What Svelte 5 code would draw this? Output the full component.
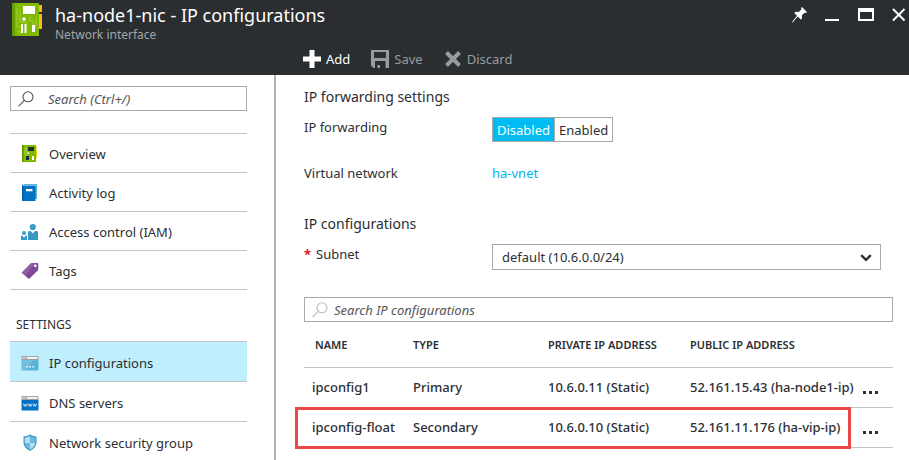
<script>
  let forwarding = $state('Disabled');
  let subnet = $state('default (10.6.0.0/24)');

  const general = [
    { label: 'Overview', icon: 'nic' },
    { label: 'Activity log', icon: 'log' },
    { label: 'Access control (IAM)', icon: 'people' },
    { label: 'Tags', icon: 'tag' },
  ];
  const settings = [
    { label: 'IP configurations', icon: 'ip', selected: true },
    { label: 'DNS servers', icon: 'dns' },
    { label: 'Network security group', icon: 'shield' },
  ];
  const rows = [
    { name: 'ipconfig1', type: 'Primary', priv: '10.6.0.11 (Static)', pub: '52.161.15.43 (ha-node1-ip)' },
    { name: 'ipconfig-float', type: 'Secondary', priv: '10.6.0.10 (Static)', pub: '52.161.11.176 (ha-vip-ip)', marked: true },
  ];
</script>

{#snippet magnifier()}
  <svg class="magnifier" width="16" height="16" viewBox="0 0 16 16" fill="none" stroke="currentColor" stroke-width="1.1" aria-hidden="true">
    <circle cx="10" cy="5.8" r="5" /><path d="M6.4 9.4 .6 15.2" />
  </svg>
{/snippet}

{#snippet icon(name)}
  <svg class="icon" width="18" height="18" viewBox="0 0 18 18" aria-hidden="true">
    {#if name === 'nic'}
      <path fill="#fcd116" d="M14 1.5h2V4h-2zM14 5h2v8h-2z" />
      <path fill="#7fba00" d="M1 0h14v17H1z" />
      <path fill="#5f9300" d="M1 0h1.5v17H1z" />
      <path fill="none" stroke="#b0d65a" stroke-width=".7" d="M4 2v8h2v3M5.5 3v5" />
      <path fill="#1e2b33" d="M7 2h6v4H7zM5 11h3v4H5z" />
      <path fill="#fff" d="M6.5 7.5h1.6v1.6H6.5zM11 11h2v4h-2z" />
    {:else if name === 'log'}
      <path fill="#59b4d9" d="M3 0h13v15H3z" />
      <path fill="#fff" d="M2.5 1h12.2v1H2.5z" />
      <path fill="#0072c6" d="M1.8 1.6H14.5V17H2Q1 17 1 16V1.2Q1 .5 2.5.3Z" />
      <path fill="#005ba1" d="M1 2h1.3v15Q1 17 1 16z" />
      <path fill="#fff" d="M5 5h6.5v2.3H5z" />
    {:else if name === 'people'}
      <g fill="#3999c6">
        <circle cx="11.8" cy="4" r="3.1" />
        <path d="M7 9.2Q7 8 8.4 8h1.2l2.2 2.6L14 8h1.2Q17 8 17 9.2V17H7z" />
        <circle cx="3" cy="10" r="1.9" />
        <path d="M0 13.4Q0 12.6 1 12.6l2 1.8 2-1.8h1V17H0z" />
      </g>
    {:else if name === 'tag'}
      <path fill="#804998" d="M.6 10.8 9.6 1.5Q10 1 11 1h5Q17.3 1 17.3 2.2V7q0 .8-.5 1.4L8 17Z" />
      <path fill="#9a6bae" d="M.6 10.8 9.6 1.5Q10 1 11 1h3L4.5 14Z" opacity=".6" />
      <circle cx="14.3" cy="3.8" r="1.4" fill="#fff" />
    {:else if name === 'ip' || name === 'dns'}
      <path fill="#a0a1a2" d="M.5 2h17v4H.5z" />
      <path fill={name === 'ip' ? '#59b4d9' : '#0072c6'} d="M.5 6h17v10.5H.5z" />
      <path fill="#fff" d="M6 3h10.5v1.8H6zM1.5 3.2h1.3v1.3H1.5zM3.6 3.2h1.3v1.3H3.6z" />
      {#if name === 'ip'}
        <path fill="#fff" d="M5 12h1.5v1.5H5zM8.2 12h1.5v1.5H8.2zM11.4 12h1.5v1.5h-1.5z" />
        <path fill="#fff" opacity=".15" d="M.5 6h12L5 16.5H.5z" />
      {:else}
        <path fill="none" stroke="#fff" stroke-width=".8" opacity=".85" d="m2.4 9.6 1 2.8.9-2.4.9 2.4 1-2.8M7.1 9.6l1 2.8.9-2.4.9 2.4 1-2.8M11.8 9.6l1 2.8.9-2.4.9 2.4 1-2.8" />
      {/if}
    {:else}
      <path fill="#3999c6" d="M9 .5Q6 2.6 2.500 2.6V8.5C2.5 12.5 6 15.5 9 17c3-1.5 6.5-4.5 6.5-8.5V2.6Q12 2.600 9 .5Z" />
      <path fill="#b8dff0" d="M9 2Q6.800 3.500 3.700 3.700V9H9zM9 9h5.300C14 12.300 11.500 14.300 9 15.700z" />
      <path fill="#6bbbe0" d="M9 2q2.200 1.500 5.300 1.700V9H9zM9 9H3.700C4 12.300 6.500 14.300 9 15.700z" />
    {/if}
  </svg>
{/snippet}

{#snippet menu(items)}
  <ul>
    {#each items as item}
      <li class:selected={item.selected}>
        <a href="#blade" aria-current={item.selected ? 'page' : undefined}>{@render icon(item.icon)}{item.label}</a>
      </li>
    {/each}
  </ul>
{/snippet}

<div class="blade">
  <header>
    <div class="heading">
      <svg class="logo" width="32" height="34" viewBox="0 0 32 34" aria-hidden="true">
        <path fill="#fcb813" d="M27 2h3v7h-3zM27 11h3v15h-3z" />
        <path fill="#7fba00" d="M0 0h27v33H0z" />
        <path fill="#69a000" d="M0 0h3v33H0z" />
        <path fill="none" stroke="#a5d03e" stroke-width="1" d="M5 5v19h4M8 8v11h6v5M12 18v-2M18 12v6h3v4M5 28h3v3M24 14v10" />
        <path fill="#fff" d="M11 3h12v8H11zM9 21h2v9H9zM12.5 21h2v9h-2zM20 22h3v7h-3z" />
        <circle cx="12" cy="16" r="1.8" fill="#fff" />
      </svg>
      <div class="titles">
        <h1>ha-node1-nic - IP configurations</h1>
        <p>Network interface</p>
      </div>
      <div class="window">
        <button aria-label="Pin">
          <svg width="16" height="16" viewBox="0 0 16 16"><path fill="#fff" d="M10 0l5 5-1 1-1.500-.3-2.700 2.700.2 3-1.200 1.200L5.700 9.500 .6 15.500 0 15 5 8.700 2.300 6 3.500 4.800l3.200.2 2.800-2.700L9 1z" /></svg>
        </button>
        <button aria-label="Minimize">
          <svg width="16" height="16" viewBox="0 0 16 16"><path fill="#fff" d="M0 12h14v2H0z" /></svg>
        </button>
        <button aria-label="Maximize">
          <svg width="16" height="16" viewBox="0 0 16 16"><path fill="#fff" fill-rule="evenodd" d="M0 1h16v13H0zM2 5v7h12V5z" /></svg>
        </button>
        <button aria-label="Close">
          <svg width="16" height="16" viewBox="0 0 16 16"><path stroke="#fff" stroke-width="2" d="m2 2 11.500 11.500M13.500 2 2 13.500" /></svg>
        </button>
      </div>
    </div>
    <div class="toolbar">
      <button>
        <svg width="18" height="18" viewBox="0 0 18 18" aria-hidden="true"><path fill="#fff" d="M6.5 0h5v6.5H18v5h-6.500V18h-5v-6.500H0v-5h6.500z" /></svg>
        Add
      </button>
      <button disabled>
        <svg width="18" height="18" viewBox="0 0 18 18" aria-hidden="true"><path fill="#999c9e" fill-rule="evenodd" d="M0 1Q0 0 1 0h16q1 0 1 1v17H2.500L0 15.500zM3 2v6h12V2zM4 11v7h2.500v-3H9v3h5.500v-7z" /></svg>
        Save
      </button>
      <button disabled>
        <svg width="18" height="18" viewBox="0 0 18 18" aria-hidden="true"><path stroke="#999c9e" stroke-width="4" d="m2.500 2.500 13 13M15.500 2.500l-13 13" /></svg>
        Discard
      </button>
    </div>
  </header>

  <div class="body">
    <nav>
      <label class="search">
        {@render magnifier()}
        <input type="text" placeholder="Search (Ctrl+/)" aria-label="Search menu" />
      </label>
      {@render menu(general)}
      <h2>SETTINGS</h2>
      {@render menu(settings)}
    </nav>

    <main>
      <h3>IP forwarding settings</h3>
      <div class="field">
        <span class="name" id="fwd">IP forwarding</span>
        <div class="toggle" role="group" aria-labelledby="fwd">
          {#each ['Disabled', 'Enabled'] as option}
            <button class:on={forwarding === option} aria-pressed={forwarding === option} onclick={() => (forwarding = option)}>{option}</button>
          {/each}
        </div>
      </div>
      <div class="field network">
        <span class="name">Virtual network</span>
        <a href="#vnet">ha-vnet</a>
      </div>

      <h3>IP configurations</h3>
      <div class="field">
        <label class="name" for="subnet"><span class="required">*</span>Subnet</label>
        <div class="dropdown">
          <select id="subnet" bind:value={subnet}>
            <option>default (10.6.0.0/24)</option>
          </select>
          <svg width="12" height="8" viewBox="0 0 12 8" aria-hidden="true"><path fill="none" stroke="#2b2f33" stroke-width="2.4" d="m1.200 1.200 4.800 4.600 4.800-4.600" /></svg>
        </div>
      </div>

      <label class="search filter">
        {@render magnifier()}
        <input type="text" placeholder="Search IP configurations" aria-label="Search IP configurations" />
      </label>

      <table>
        <colgroup>
          <col class="c-name" />
          <col class="c-type" />
          <col class="c-priv" />
          <col />
          <col class="c-more" />
        </colgroup>
        <thead>
          <tr>
            <th class="first">NAME</th>
            <th>TYPE</th>
            <th>PRIVATE IP ADDRESS</th>
            <th>PUBLIC IP ADDRESS</th>
            <td></td>
          </tr>
        </thead>
        <tbody>
          {#each rows as row}
            <tr class:marked={row.marked}>
              <td>{row.name}</td>
              <td>{row.type}</td>
              <td>{row.priv}</td>
              <td>{row.pub}</td>
              <td>
                <button class="more" aria-label="More actions">
                  <svg width="16" height="4" viewBox="0 0 16 4"><path fill="#2b2f33" d="M1 1h3v3H1zM7 1h3v3H7zM13 1h3v3h-3z" /></svg>
                </button>
              </td>
            </tr>
          {/each}
        </tbody>
      </table>
    </main>
  </div>
</div>

<style>
  :global(body) {
    background: #fff;
  }
  .blade {
    display: flex;
    flex-direction: column;
    height: 100vh;
    overflow: hidden;
    font: 13px/20px 'Segoe UI', 'Noto Sans', sans-serif;
    color: #2b2f33;
  }
  .blade * {
    box-sizing: border-box;
  }
  button,
  input,
  select {
    font: inherit;
    color: inherit;
    margin: 0;
    padding: 0;
    border: 0;
    background: none;
  }
  svg {
    display: block;
    flex: none;
  }
  h1,
  h2,
  h3,
  p,
  ul {
    margin: 0;
    padding: 0;
    font-weight: 400;
  }
  ul {
    list-style: none;
  }
  a {
    color: inherit;
    text-decoration: none;
  }

  header {
    flex: none;
    height: 75px;
    background: #2a2e31;
    color: #fff;
  }
  .heading {
    display: flex;
    align-items: flex-start;
    height: 44px;
    padding: 3px 2px 0 12px;
  }
  .titles {
    flex: 1;
    padding-left: 11px;
  }
  h1 {
    font-size: 18px;
    line-height: 25px;
  }
  .titles p {
    font-size: 12px;
    line-height: 14px;
    color: #a3a5a7;
  }
  .window {
    display: flex;
    gap: 17px;
    padding-top: 4px;
  }
  .toolbar {
    display: flex;
    gap: 21px;
    padding: 5px 0 0 303px;
  }
  .toolbar button {
    display: flex;
    align-items: center;
    gap: 5px;
  }
  .toolbar button:disabled {
    color: #999c9e;
  }

  .body {
    display: flex;
    flex: 1;
    min-height: 0;
  }
  nav {
    flex: none;
    width: 276px;
    padding: 11px 27px 0 10px;
    border-right: 2px solid #b1b1b1;
    overflow: hidden;
  }
  .search {
    display: flex;
    align-items: center;
    gap: 14px;
    height: 25px;
    padding: 0 7px;
    border: 1px solid #a9a9a9;
    color: #555;
  }
  .search input {
    flex: 1;
    min-width: 0;
    outline: none;
  }
  .search input::placeholder {
    color: #555;
    font-style: italic;
    opacity: 1;
  }
  nav ul {
    border-top: 1px solid #c4c4c4;
  }
  nav .search + ul {
    margin-top: 22px;
  }
  li {
    height: 40px;
    border-bottom: 1px solid #c4c4c4;
  }
  .search + ul li {
    height: 39px;
  }
  li.selected {
    background: #bfeefd;
  }
  li a {
    display: flex;
    align-items: center;
    gap: 10px;
    height: 100%;
    padding: 2px 0 0 11px;
  }
  h2 {
    padding: 25px 0 6px 6px;
    font-size: 12px;
    line-height: 20px;
  }

  main {
    flex: 1;
    min-width: 0;
    padding: 11px 16px 0 28px;
  }
  h3 {
    font-size: 14px;
    line-height: 22px;
  }
  .field {
    display: flex;
    margin-top: 9px;
    min-height: 26px;
  }
  .name {
    flex: none;
    width: 188px;
  }
  .network {
    margin: 20px 0 24px;
  }
  .network a {
    color: #00b2ea;
  }
  .required {
    margin-right: 5px;
    color: #e81123;
    font-weight: 700;
  }
  .toggle {
    display: flex;
    height: 25px;
    border: 1px solid #a9a9a9;
  }
  .toggle button {
    padding: 0 4px;
  }
  .toggle .on {
    background: #00bcf2;
    color: #fff;
  }
  .toggle button + button {
    border-left: 1px solid #a9a9a9;
  }
  .dropdown {
    position: relative;
    flex: 1;
    margin-right: 12px;
  }
  .dropdown select {
    appearance: none;
    width: 100%;
    height: 26px;
    padding: 0 9px;
    border: 1px solid #a9a9a9;
  }
  .dropdown svg {
    position: absolute;
    right: 9px;
    top: 10px;
    pointer-events: none;
  }
  .filter {
    margin-top: 27px;
    gap: 6px;
  }
  .filter .magnifier {
    color: #bbb;
  }

  table {
    width: 100%;
    table-layout: fixed;
    border-collapse: collapse;
  }
  th,
  td {
    height: 40px;
    padding: 0 0 0 8px;
    text-align: left;
    font-weight: 500;
    white-space: nowrap;
    border-bottom: 1px solid #c4c4c4;
  }
  thead th,
  thead td {
    height: 45px;
    padding-top: 2px;
    font-size: 11px;
    font-weight: 600;
  }
  thead .first {
    padding-left: 11px;
  }
  .c-name {
    width: 101px;
  }
  .c-type {
    width: 135px;
  }
  .c-priv {
    width: 142px;
  }
  .c-more {
    width: 39px;
  }
  .more {
    display: block;
    padding-top: 10px;
  }
  /* outline round the floating address, clear of the actions column */
  .marked {
    position: relative;
  }
  .marked td:first-child::after {
    content: '';
    position: absolute;
    inset: 0 42px -2px -9px;
    border: 3px solid #eb4747;
  }
</style>
